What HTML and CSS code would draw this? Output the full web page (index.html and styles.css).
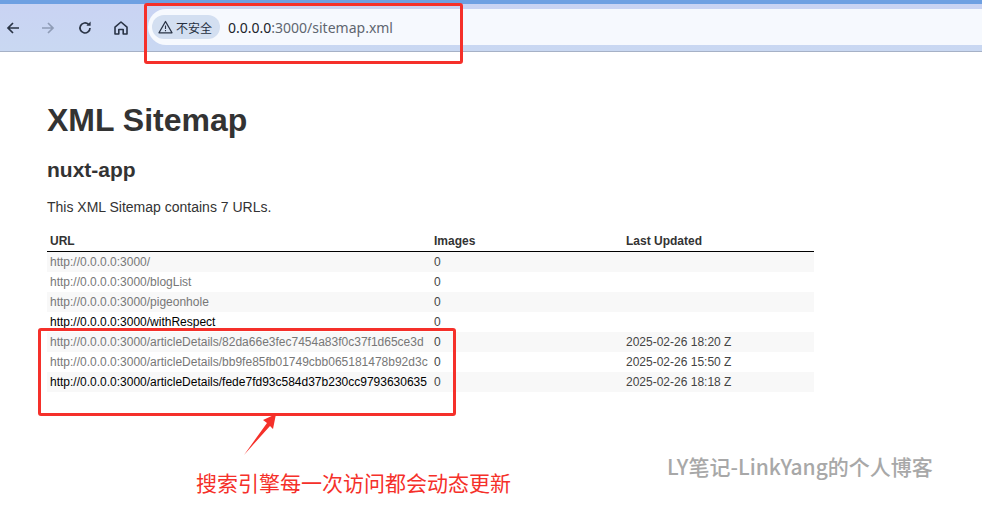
FILE: index.html
```html
<!DOCTYPE html>
<html lang="zh">
<head>
<meta charset="utf-8">
<title>XML Sitemap</title>
<link rel="stylesheet" href="styles.css">
</head>
<body>
<header class="toolbar">
  <button class="nav nav-back"><svg width="16" height="16" viewBox="0 0 16 16"><path d="M14 8H3M8 3 3 8l5 5" fill="none" stroke="#2a3446" stroke-width="1.7"/></svg></button>
  <button class="nav nav-fwd"><svg width="16" height="16" viewBox="0 0 16 16"><path d="M2 8h11M8 3l5 5-5 5" fill="none" stroke="#8f9cb6" stroke-width="1.7"/></svg></button>
  <button class="nav nav-reload"><svg width="16" height="16" viewBox="0 0 16 16"><path d="M13 8a5 5 0 1 1-1.5-3.6" fill="none" stroke="#2a3446" stroke-width="1.7"/><path d="M13.6 1.6v4.2H9.4z" fill="#2a3446"/></svg></button>
  <button class="nav nav-home"><svg width="16" height="16" viewBox="0 0 16 16"><path d="M2 7.2 8 2l6 5.200V14h-3.800V9.500H5.800V14H2z" fill="none" stroke="#2a3446" stroke-width="1.600" stroke-linejoin="round"/></svg></button>
  <div class="omnibox">
    <span class="chip"><svg width="15" height="14" viewBox="0 0 15 14"><path d="M7.500 1.500 14 12.800H1z" fill="none" stroke="#2a3446" stroke-width="1.300" stroke-linejoin="round"/><path d="M7.500 5.500v3.600M7.500 10v1.200" stroke="#2a3446" stroke-width="1.100"/></svg>不安全</span>
    <span class="url"><span class="host">0.0.0.0</span>:3000/sitemap.xml</span>
  </div>
</header>
<main class="page">
  <h1>XML Sitemap</h1>
  <h2>nuxt-app</h2>
  <p class="count">This XML Sitemap contains 7 URLs.</p>
  <table class="sitemap">
    <thead>
      <tr><th class="c-url">URL</th><th class="c-img">Images</th><th class="c-date">Last Updated</th></tr>
    </thead>
    <tbody>
      <tr><td class="link">http://0.0.0.0:3000/</td><td>0</td><td></td></tr>
      <tr><td class="link">http://0.0.0.0:3000/blogList</td><td>0</td><td></td></tr>
      <tr><td class="link">http://0.0.0.0:3000/pigeonhole</td><td>0</td><td></td></tr>
      <tr><td class="link hot">http://0.0.0.0:3000/withRespect</td><td>0</td><td></td></tr>
      <tr><td class="link">http://0.0.0.0:3000/articleDetails/82da66e3fec7454a83f0c37f1d65ce3d</td><td>0</td><td>2025-02-26 18:20 Z</td></tr>
      <tr><td class="link">http://0.0.0.0:3000/articleDetails/bb9fe85fb01749cbb065181478b92d3c</td><td>0</td><td>2025-02-26 15:50 Z</td></tr>
      <tr><td class="link hot">http://0.0.0.0:3000/articleDetails/fede7fd93c584d37b230cc9793630635</td><td>0</td><td>2025-02-26 18:18 Z</td></tr>
    </tbody>
  </table>
</main>
<div class="mark mark-bar"></div>
<div class="mark mark-table"></div>
<svg class="arrow" width="40" height="44" viewBox="0 0 40 44"><path d="M3 43 26 11l-4-3L35 2l-3 15-3-3z" fill="#f5302a"/></svg>
<div class="note">搜索引擎每一次访问都会动态更新</div>
<div class="watermark">LY笔记-LinkYang的个人博客</div>
</body>
</html>
```
FILE: styles.css
```css
html, body {
  margin: 0;
  padding: 0;
  height: 529px;
  overflow: hidden;
  background: #fff;
  font-family: "Liberation Sans", Arial, sans-serif;
  color: #333;
}
.toolbar {
  display: flex;
  align-items: center;
  box-sizing: border-box;
  height: 52px;
  padding: 4px 0 0 0;
  background: linear-gradient(#6ea0e2 0, #6ea0e2 4px, #c9d3f3 4px, #c9d8f2 100%);
  border-bottom: 1px solid #a6b1c6;
}
.nav {
  flex: none;
  width: 36px;
  height: 28px;
  padding: 0;
  display: flex;
  align-items: center;
  justify-content: center;
  background: none;
  border: 0;
}
.nav-back { width: 26px; margin-right: 9px; }
.nav-fwd { width: 26px; margin-right: 11px; }
.nav-reload { width: 26px; margin-right: 10px; }
.nav-home { width: 26px; margin-right: 14px; }
.omnibox {
  flex: 1;
  display: flex;
  align-items: center;
  height: 36px;
  margin: 0 0 1px 0;
  padding-left: 4px;
  background: #f6f9fe;
  border-radius: 18px 0 0 18px;
}
.chip {
  display: flex;
  align-items: center;
  gap: 3px;
  height: 24px;
  padding: 0 8px 0 6px;
  border-radius: 12px;
  background: #d3dff1;
  color: #27303f;
  font: 12px "Noto Sans CJK SC", sans-serif;
}
.url {
  margin-left: 8px;
  font: 14px "Noto Sans", "Open Sans", sans-serif;
  color: #5f6670;
}
.host { color: #20242b; }
.page { padding: 0 0 0 47px; }
h1 {
  margin: 50px 0 0;
  font-size: 32px;
  line-height: 37px;
  font-weight: 700;
  color: #333;
}
h2 {
  margin: 19px 0 0;
  font-size: 21px;
  line-height: 23px;
  font-weight: 700;
  color: #333;
}
.count {
  margin: 18px 0 0;
  font-size: 14px;
  line-height: 16px;
  color: #333;
}
.sitemap {
  margin-top: 17px;
  width: 767px;
  table-layout: fixed;
  border-collapse: collapse;
  font-size: 12px;
  color: #444;
}
.c-url { width: 378px; }
.c-img { width: 186px; }
.sitemap th {
  height: 18px;
  padding: 0 3px 1px;
  text-align: left;
  font-weight: 700;
  border-bottom: 1px solid #000;
  color: #333;
}
.sitemap td {
  height: 20px;
  padding: 0 3px;
  white-space: nowrap;
}
.sitemap tbody tr:nth-child(odd) { background: #f8f8f8; }
.link { color: #777; }
.hot { color: #000; }
.mark {
  position: absolute;
  box-sizing: border-box;
  border: 3px solid #f5302a;
  border-radius: 3px;
}
.mark-bar { left: 144px; top: 3px; width: 319px; height: 61px; }
.mark-table { left: 38px; top: 328px; width: 418px; height: 88px; }
.arrow { position: absolute; left: 241px; top: 412px; }
.note {
  position: absolute;
  left: 196px;
  top: 468px;
  font: 21px/28px "Noto Sans CJK SC", sans-serif;
  color: #f5302a;
}
.watermark {
  position: absolute;
  left: 667px;
  top: 452px;
  font: 500 21px/28px "Noto Sans CJK SC", sans-serif;
  color: #a8a8a8;
}
```
